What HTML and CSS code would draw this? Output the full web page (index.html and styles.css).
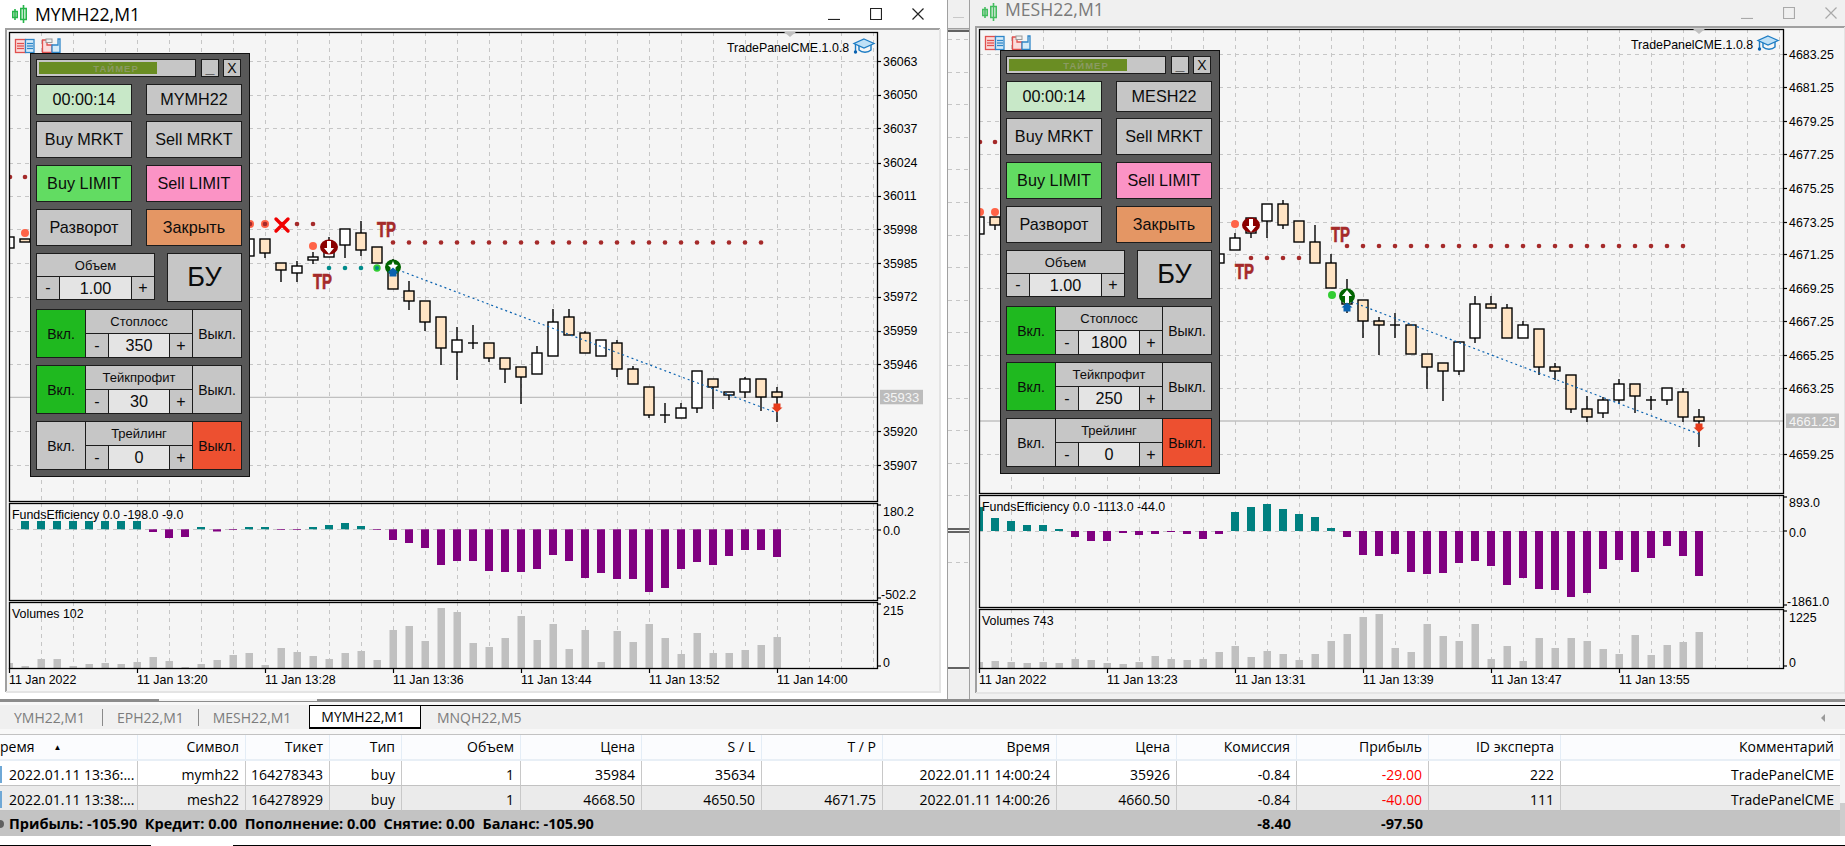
FILE: index.html
```html
<!DOCTYPE html>
<html lang="ru">
<head>
<meta charset="utf-8">
<title>MetaTrader 5 - TradePanelCME</title>
<link rel="stylesheet" href="styles.css">
</head>
<body>
<div class="app">
  <div class="desktop">
    <section class="window win-left">
      <header class="titlebar title-active">
        <svg class="ticon" viewBox="0 0 15 18"><path d="M3 4v11M.8 6.500h4.400v6H.8zM11.500 0v18M8.800 3.500h5.400v11H8.800z"/></svg>
        <span class="wtitle">MYMH22,M1</span>
        <div class="controls">
          <button class="ctl"><svg viewBox="0 0 12 12"><path d="M0 11.5h12"/></svg></button>
          <button class="ctl"><svg viewBox="0 0 12 12"><path d="M.5.5h11v11H.5z"/></svg></button>
          <button class="ctl"><svg viewBox="0 0 12 12"><path d="M.5.5l11 11M11.5.5l-11 11"/></svg></button>
        </div>
      </header>
      <div class="win-body">
        <svg id="chartL" class="chart chart-left"></svg>
        <div class="panel panel-left">
          <div class="p-row r-top">
            <div class="pb timer"><span class="timer-fill"></span><span class="timer-text">ТАЙМЕР</span></div>
            <div class="pb sq under">_</div>
            <div class="pb sq sq-x">X</div>
          </div>
          <div class="p-row r-clock"><div class="pb clock">00:00:14</div><div class="pb">MYMH22</div></div>
          <div class="p-row r-btn"><div class="pb">Buy MRKT</div><div class="pb">Sell MRKT</div></div>
          <div class="p-row r-btn"><div class="pb buy">Buy LIMIT</div><div class="pb sell">Sell LIMIT</div></div>
          <div class="p-row r-btn"><div class="pb">Разворот</div><div class="pb close">Закрыть</div></div>
          <div class="p-row r-vol">
            <div class="vol"><div class="pb lbl">Объем</div><div class="stepper"><div class="pb st">-</div><div class="pb val">1.00</div><div class="pb st">+</div></div></div>
            <div class="pb bu">БУ</div>
          </div>
          <div class="group"><div class="pb gb on">Вкл.</div><div class="gmid"><div class="pb lbl">Стоплосс</div><div class="stepper"><div class="pb st">-</div><div class="pb val">350</div><div class="pb st">+</div></div></div><div class="pb gb">Выкл.</div></div>
          <div class="group"><div class="pb gb on">Вкл.</div><div class="gmid"><div class="pb lbl">Тейкпрофит</div><div class="stepper"><div class="pb st">-</div><div class="pb val">30</div><div class="pb st">+</div></div></div><div class="pb gb">Выкл.</div></div>
          <div class="group"><div class="pb gb">Вкл.</div><div class="gmid"><div class="pb lbl">Трейлинг</div><div class="stepper"><div class="pb st">-</div><div class="pb val">0</div><div class="pb st">+</div></div></div><div class="pb gb off">Выкл.</div></div>
        </div>
      </div>
    </section>

    <section class="window win-back">
      <header class="titlebar-back"><span class="back-min"></span></header>
      <svg id="chartB" class="chart chart-back"></svg>
    </section>

    <section class="window win-right">
      <header class="titlebar title-inactive">
        <svg class="ticon" viewBox="0 0 15 18"><path d="M3 4v11M.8 6.500h4.400v6H.8zM11.500 0v18M8.800 3.500h5.400v11H8.800z"/></svg>
        <span class="wtitle">MESH22,M1</span>
        <div class="controls">
          <button class="ctl"><svg viewBox="0 0 12 12"><path d="M0 11.5h12"/></svg></button>
          <button class="ctl"><svg viewBox="0 0 12 12"><path d="M.5.5h11v11H.5z"/></svg></button>
          <button class="ctl"><svg viewBox="0 0 12 12"><path d="M.5.5l11 11M11.5.5l-11 11"/></svg></button>
        </div>
      </header>
      <div class="win-body">
        <svg id="chartR" class="chart chart-right"></svg>
        <div class="panel panel-right">
          <div class="p-row r-top">
            <div class="pb timer"><span class="timer-fill"></span><span class="timer-text">ТАЙМЕР</span></div>
            <div class="pb sq under">_</div>
            <div class="pb sq sq-x">X</div>
          </div>
          <div class="p-row r-clock"><div class="pb clock">00:00:14</div><div class="pb">MESH22</div></div>
          <div class="p-row r-btn"><div class="pb">Buy MRKT</div><div class="pb">Sell MRKT</div></div>
          <div class="p-row r-btn"><div class="pb buy">Buy LIMIT</div><div class="pb sell">Sell LIMIT</div></div>
          <div class="p-row r-btn"><div class="pb">Разворот</div><div class="pb close">Закрыть</div></div>
          <div class="p-row r-vol">
            <div class="vol"><div class="pb lbl">Объем</div><div class="stepper"><div class="pb st">-</div><div class="pb val">1.00</div><div class="pb st">+</div></div></div>
            <div class="pb bu">БУ</div>
          </div>
          <div class="group"><div class="pb gb on">Вкл.</div><div class="gmid"><div class="pb lbl">Стоплосс</div><div class="stepper"><div class="pb st">-</div><div class="pb val">1800</div><div class="pb st">+</div></div></div><div class="pb gb">Выкл.</div></div>
          <div class="group"><div class="pb gb on">Вкл.</div><div class="gmid"><div class="pb lbl">Тейкпрофит</div><div class="stepper"><div class="pb st">-</div><div class="pb val">250</div><div class="pb st">+</div></div></div><div class="pb gb">Выкл.</div></div>
          <div class="group"><div class="pb gb">Вкл.</div><div class="gmid"><div class="pb lbl">Трейлинг</div><div class="stepper"><div class="pb st">-</div><div class="pb val">0</div><div class="pb st">+</div></div></div><div class="pb gb off">Выкл.</div></div>
        </div>
      </div>
    </section>
  </div>

  <div class="divider"><span class="hbar"></span></div>

  <nav class="tabs">
    <div class="tab tab-first">YMH22,M1</div>
    <div class="tab">EPH22,M1</div>
    <div class="tab tab-pre">MESH22,M1</div>
    <div class="tab tab-active">MYMH22,M1</div>
    <div class="tab tab-last">MNQH22,M5</div>
    <span class="tab-arrow"></span>
  </nav>

  <div class="table-wrap">
    <div class="table">
      <div class="trow thead">
        <div class="c l"><span class="hfirst">ремя</span><span class="sort">▲</span></div><div class="c">Символ</div><div class="c">Тикет</div><div class="c">Тип</div><div class="c">Объем</div><div class="c">Цена</div><div class="c">S / L</div><div class="c">T / P</div><div class="c">Время</div><div class="c">Цена</div><div class="c">Комиссия</div><div class="c">Прибыль</div><div class="c">ID эксперта</div><div class="c">Комментарий</div>
      </div>
      <div class="trow row-a">
        <div class="c l"><span class="mark"></span>2022.01.11 13:36:...</div><div class="c">mymh22</div><div class="c">164278343</div><div class="c">buy</div><div class="c">1</div><div class="c">35984</div><div class="c">35634</div><div class="c"></div><div class="c">2022.01.11 14:00:24</div><div class="c">35926</div><div class="c">-0.84</div><div class="c neg">-29.00</div><div class="c">222</div><div class="c">TradePanelCME</div>
      </div>
      <div class="trow row-b">
        <div class="c l"><span class="mark"></span>2022.01.11 13:38:...</div><div class="c">mesh22</div><div class="c">164278929</div><div class="c">buy</div><div class="c">1</div><div class="c">4668.50</div><div class="c">4650.50</div><div class="c">4671.75</div><div class="c">2022.01.11 14:00:26</div><div class="c">4660.50</div><div class="c">-0.84</div><div class="c neg">-40.00</div><div class="c">111</div><div class="c">TradePanelCME</div>
      </div>
      <div class="trow row-sum">
        <div class="c l sum-main"><span class="dot"></span>Прибыль: -105.90&nbsp; Кредит: 0.00&nbsp; Пополнение: 0.00&nbsp; Снятие: 0.00&nbsp; Баланс: -105.90</div><div class="c">-8.40</div><div class="c">-97.50</div><div class="c"></div><div class="c"></div>
      </div>
    </div>
    <div class="scrollbar"><span class="thumb"></span></div>
  </div>
  <div class="footline"><span class="fl-a"></span><span class="fl-b"></span></div>
</div>
<script src="app.js"></script>
</body>
</html>
```

FILE: styles.css
```css
* { box-sizing: border-box; }
html, body { margin: 0; padding: 0; width: 1845px; height: 846px; overflow: hidden; background: #fff; }
.app { width: 1845px; height: 846px; display: flex; flex-direction: column; font-family: "Open Sans", "Noto Sans", sans-serif; color: #000; }

/* desktop + windows */
.desktop { position: relative; height: 699px; background: #f0f0f0; flex: none; overflow: hidden; }
.window { position: absolute; top: 0; height: 699px; display: flex; flex-direction: column; overflow: hidden; }
.win-left { left: 0; width: 948px; background: #fff; border-right: 1px solid #a0a0a0; }
.win-back { left: 948px; width: 22px; background: #f0f0f0; border-right: 1px solid #a0a0a0; }
.win-right { left: 970px; width: 875px; background: #f0f0f0; }

.titlebar { flex: none; display: flex; align-items: center; padding-left: 12px; }
.title-active { height: 28px; background: #fff; color: #000; }
.title-inactive { height: 26px; background: #f0f0f0; color: #7a7a7a; padding-bottom: 9px; }
.ticon { width: 15px; height: 18px; fill: none; stroke: #27b54a; stroke-width: 1.6; flex: none; margin-right: 8px; overflow: visible; }
.title-inactive .ticon { stroke: #44bd5f; margin-top: 7px; }
.wtitle { font-size: 17.6px; line-height: 22px; white-space: nowrap; }
.controls { margin-left: auto; display: flex; margin-right: 8px; }
.title-inactive .controls { margin-right: -7px; padding-top: 9px; }
.ctl { width: 42px; height: 20px; padding: 0; border: 0; background: none; display: flex; align-items: center; justify-content: center; }
.ctl svg { width: 12px; height: 12px; fill: none; stroke: #222; stroke-width: 1.2; display: block; }
.title-inactive .ctl svg { stroke: #a9a9a9; }

.titlebar-back { height: 28px; flex: none; display: flex; align-items: center; justify-content: center; padding-top: 6px; }
.back-min { width: 11px; height: 1px; background: #c8c8c8; }

.win-body { position: relative; flex: 1; min-height: 0; }
.chart { display: block; }
.chart-left { width: 947px; height: 671px; }
.chart-back { width: 21px; height: 671px; }
.chart-right { width: 875px; height: 673px; }

/* svg parts */
.frame { fill: #f5f5f5; }
.fr-dark { stroke: #a0a0a0; stroke-width: 2; fill: none; }
.fr-light { stroke: #e4e4e4; stroke-width: 2; fill: none; }
.grid { stroke: #c6c6c6; stroke-width: 1; stroke-dasharray: 4 4; shape-rendering: crispEdges; fill: none; }
.cur { stroke: #c0c0c0; stroke-width: 1.3; }
.pane { fill: none; stroke: #000; stroke-width: 1.3; }
.tick { stroke: #000; stroke-width: 1.2; }
.wick { stroke: #000; stroke-width: 1.4; }
.bd { stroke: #000; stroke-width: 1.4; }
.bd-w { fill: #fff; }
.bd-p { fill: #ffe4c4; }
.dot-br { fill: #a52a2a; }
.dot-to { fill: #ff6347; }
.dot-te { fill: #008b8b; }
.dot-gr { fill: #32cd32; }
.v-te { fill: #008080; }
.v-pu { fill: #800080; }
.v-gr { fill: #c0c0c0; }
.trend { stroke: #0a62b0; stroke-width: 1.2; stroke-dasharray: 2 3; fill: none; }
.tx { font-family: "Liberation Sans", Arial, sans-serif; font-size: 12.4px; fill: #000; }
.tx-cur { fill: #f4f4f4; font-size: 13px; }
.cur-box { fill: #bcbcbc; }
.tp { font-family: "Liberation Sans", Arial, sans-serif; font-weight: 700; font-size: 22px; fill: #a52a2a; stroke: #a52a2a; stroke-width: .7; }
.x-mark { stroke: #f00000; stroke-width: 3.4; fill: none; stroke-linecap: round; }
.sell-ring { fill: #8b0000; }
.buy-ring { fill: #006400; }
.arrow-w { fill: #fff; }
.arrow-b { fill: #0a62b0; }
.arrow-r { fill: #e63a1a; }
.tri { fill: #c0c0c0; }
.cap-a { fill: #bfe0f6; stroke: #1c7cc4; stroke-width: 1.3; }
.cap-b { fill: none; stroke: #1c7cc4; stroke-width: 1.4; }
.ic-r { fill: #fbdcdc; stroke: #e0504e; stroke-width: 1.3; }
.ic-b { fill: #d6ebf8; stroke: #2e86c8; stroke-width: 1.3; }
.ic-rl { stroke: #e0504e; stroke-width: 1.3; }
.ic-bl { stroke: #2e86c8; stroke-width: 1.3; }
.ic-g { fill: #f0f0f0; stroke: #999; stroke-width: 1; }

/* trade panel */
.panel { position: absolute; width: 220px; height: 424px; padding: 5px 7px 6px 5px; background: #585858; border: 1px solid #111; display: flex; flex-direction: column; gap: 7px; font-family: "Liberation Sans", Arial, sans-serif; color: #0c0c0c; }
.panel-left { left: 30px; top: 25px; }
.panel-right { left: 30px; top: 24px; }
.p-row { display: flex; flex: none; }
.pb { background: #c6c6c6; border: 1px solid #1c1c1c; display: flex; align-items: center; justify-content: center; font-size: 16.2px; white-space: nowrap; }
.r-top { height: 18px; gap: 4px; }
.r-clock { height: 31px; margin-bottom: -1px; gap: 14px; }
.r-btn { height: 37px; gap: 14px; }
.r-clock .pb, .r-btn .pb { width: 96px; }
.timer { position: relative; width: 160px; margin-right: 1px; }
.timer-fill { position: absolute; left: 2px; top: 2px; bottom: 2px; width: 118px; background: #6a8d23; }
.timer-text { position: relative; font-size: 9.5px; font-weight: 700; letter-spacing: 1px; color: #8a9a62; }
.sq { width: 18px; font-size: 14px; }
.under { font-size: 16px; font-weight: 700; }
.clock { background: #c8e8c8; }
.buy { background: #62dc62; }
.sell { background: #fb93c5; }
.close { background: #e49664; }
.r-vol { height: 49px; justify-content: space-between; }
.vol { width: 119px; height: 47px; display: flex; flex-direction: column; }
.lbl { font-size: 13px; height: 24px; flex: none; background: #c6c6c6; }
.stepper { display: flex; flex: 1; margin-top: -1px; }
.st { width: 24px; flex: none; font-size: 16px; }
.val { flex: 1; margin: 0 -1px; background: #e4e4e4; }
.bu { width: 75px; font-size: 27px; }
.group { display: flex; height: 49px; flex: none; }
.gb { width: 50px; flex: none; font-size: 14px; }
.on { background: #1fb91f; }
.off { background: #ed5030; }
.gmid { flex: 1; margin: 0 -1px; display: flex; flex-direction: column; }
.gmid .lbl { height: 25px; }

/* bottom area */
.divider { height: 3px; background: #8c8c8c; flex: none; position: relative; }
.hbar { position: absolute; left: 158px; top: 0; width: 160px; height: 3px; background: #f4f4f4; border: 1px solid #8c8c8c; border-top: 0; }
.tabs { flex: none; height: 33px; padding: 3px 0 5px; display: flex; align-items: stretch; background: #f8f8f8; position: relative; font-size: 14px; color: #7c7c7c; border-bottom: 1px solid #c2c2c2; }
.tab { display: flex; align-items: center; padding: 0 15px 0 14px; background: #f0f0f0; white-space: nowrap; position: relative; border-top: 1px solid #f0f0f0; }
.tab + .tab::before { content: ""; position: absolute; left: -1px; top: 3px; bottom: 3px; width: 1px; background: #8a8a8a; }
.tab-first { padding-right: 18px; }
.tab-pre { padding-right: 18px; }
.tab-active { color: #000; background: #fff; border: 1px solid #000; border-bottom-width: 2px; padding: 0 15px 0 11px; }
.tab-active::before, .tab-last::before { display: none; }
.tab-last { flex: 1; border-top: 1px solid #000; padding-left: 16px; }
.tab-arrow { position: absolute; left: 1821px; top: 12px; width: 0; height: 0; border: 4px solid transparent; border-left-width: 0; border-right: 4px solid #9a9a9a; }
.table-wrap { flex: none; display: flex; height: 101px; }
.table { width: 1840px; font-size: 14px; line-height: 18px; overflow: hidden; }
.trow { display: grid; grid-template-columns: 138px 108px 84px 72px 119px 121px 120px 121px 174px 120px 120px 132px 132px 279px; height: 25px; white-space: nowrap; }
.c { display: flex; align-items: center; justify-content: flex-end; padding-right: 6px; }
.c.l { justify-content: flex-start; padding-right: 0; overflow: visible; }
.thead { background: #fbfcfe; height: 26px; }
.thead .c { border-right: 1px solid #e4edf6; border-bottom: 2px solid #e8eff6; }
.sort { font-size: 8px; margin-left: 19px; }
.mark { width: 2px; height: 17px; background: #6fa8d6; margin-right: 7px; flex: none; }
.row-a .c, .row-b .c { border-right: 1px solid #c8c8c8; border-bottom: 1px solid #c2c2c2; padding-top: 3px; }
.row-a .c:last-child, .row-b .c:last-child, .thead .c:last-child { border-right: 0; }
.row-b { background: #ebebeb; }
.neg { color: #f00; }
.row-sum { background: #c3c3c3; font-weight: 700; font-size: 14.5px; height: 25px; }
.sum-main { grid-column: 1 / 11; }
.dot { width: 4px; height: 8px; border-radius: 0 4px 4px 0; background: #5f5f5f; margin-right: 5px; flex: none; }
.scrollbar { width: 5px; background: #f4f4f4; display: flex; align-items: flex-end; }
.thumb { width: 5px; height: 33px; background: #cdcdcd; }
.footline { flex: 1; display: flex; align-items: flex-end; }
.fl-a { width: 151px; height: 1px; background: #000; }
.fl-b { margin-left: 82px; flex: 1; height: 1px; background: #000; }
```

FILE: app.js
```js
function range(a, b, s) { var r = []; for (var i = a; i <= b; i += s) r.push(i); return r; }
function crisp(v) { return Math.round(v) + 0.5; }
function line(x1, y1, x2, y2, c) { return '<line class="' + c + '" x1="' + x1 + '" y1="' + y1 + '" x2="' + x2 + '" y2="' + y2 + '"/>'; }
function rect(x, y, w, h, c) { return '<rect class="' + c + '" x="' + x + '" y="' + y + '" width="' + w + '" height="' + h + '"/>'; }
function dot(x, y, r, c) { return '<circle class="' + c + '" cx="' + x + '" cy="' + y + '" r="' + r + '"/>'; }
function text(x, y, s, c) { return '<text class="' + (c || 'tx') + '" x="' + x + '" y="' + y + '">' + s + '</text>'; }
function tp(x, y) { return '<text class="tp" x="' + x + '" y="' + y + '" textLength="19" lengthAdjust="spacingAndGlyphs">TP</text>'; }

function capIcon(x, y) {
  return '<g transform="translate(' + x + ' ' + y + ')">' +
    '<path class="cap-b" d="M5 6v5c3 3 9 3 12 0V6"/>' +
    '<path class="cap-a" d="M10 0l10 4.5-10 4.5L0 4.5z"/>' +
    '<path class="cap-b" d="M1.5 5v7"/>' + dot(1.5, 13, 1.7, 'arrow-b') + '</g>';
}
function toolIcons(x, y) {
  return '<g transform="translate(' + x + ' ' + y + ')">' +
    '<rect class="ic-r" x=".5" y=".5" width="10" height="13"/><rect class="ic-b" x="10.5" y=".5" width="8.5" height="13"/>' +
    line(2, 4.5, 9, 4.5, 'ic-rl') + line(2, 7, 9, 7, 'ic-rl') + line(2, 9.5, 9, 9.5, 'ic-rl') +
    line(12, 4.5, 18, 4.5, 'ic-bl') + line(12, 7, 18, 7, 'ic-bl') + line(12, 9.5, 18, 9.5, 'ic-bl') +
    '<path class="ic-r" d="M27.5 1v12.5H37V6h-5V1z"/><path class="ic-b" d="M37 13.500h8V0h-2v6h-6z"/>' +
    '<rect class="ic-g" x="31" y="0" width="6" height="3.500"/></g>';
}
/* stubby marker arrows: head 11 wide, shaft 7 wide */
function arrowUp(x, y, c) { return '<path class="' + c + '" d="M' + x + ' ' + (y - 4.5) + 'l5.500 5h-2v4h-7v-4h-2z"/>'; }
function arrowDown(x, y, c) { return '<path class="' + c + '" d="M' + x + ' ' + (y + 4.5) + 'l5.500-5h-2v-4h-7v4h-2z"/>'; }
/* long white arrows inside the entry / exit rings */
function ringDown(x, y) { return '<path class="arrow-w" d="M' + (x - 2) + ' ' + (y - 6) + 'h4v7h3l-5 6-5-6h3z"/>'; }
function ringUp(x, y) { return '<path class="arrow-w" d="M' + (x - 2) + ' ' + (y + 7) + 'h4v-7h3l-5-6-5 6h3z"/>'; }
function sellMark(x, y) {
  return '<ellipse class="sell-ring" cx="' + x + '" cy="' + y + '" rx="9" ry="7.500"/>' + ringDown(x, y);
}
function buyMark(x, y, tall) {
  var s = '<ellipse class="buy-ring" cx="' + x + '" cy="' + y + '" rx="8" ry="7.500"/>';
  if (tall) return s + ringUp(x, y);
  return s + '<path class="arrow-w" d="M' + x + ' ' + (y - 6) + 'l1.500 3.500 3.500.5-2.500 2.500v2.500h-5v-2.500l-2.500-2.500 3.500-.5z"/>';
}
function candle(d) {
  var x = d[0], t = d[1], a = d[2], b = d[3], wt = d[4] === undefined ? a : d[4], wb = d[5] === undefined ? b : d[5];
  var s = line(x, wt, x, wb, 'wick');
  if (t === 'd') return s + line(x - 5, a, x + 5, a, 'wick');
  return s + rect(x - 5, a, 10, b - a, 'bd ' + (t === 'w' ? 'bd-w' : 'bd-p'));
}

function chart(c) {
  var out = '';
  out += '<clipPath id="' + c.id + 'clip"><rect x="' + c.L + '" y="' + c.top + '" width="' + (c.R - c.L) + '" height="' + (c.bottom - c.top) + '"/></clipPath>';
  out += rect(c.fx, c.fy, c.fr - c.fx, c.fb - c.fy, 'frame');
  out += '<path class="fr-dark" d="M' + c.fx + ' ' + c.fb + 'V' + c.fy + 'H' + c.fr + '"/>';
  out += '<path class="fr-light" d="M' + c.fx + ' ' + c.fb + 'H' + c.fr + 'V' + c.fy + '"/>';
  var body = '';
  var m = c.panes[0], s1 = c.panes[1], s2 = c.panes[2];
  c.prices.forEach(function (p) { body += line(c.L, crisp(p[1]), c.R, crisp(p[1]), 'grid'); });
  range(c.gx0, c.gx1, 32).forEach(function (x) {
    body += line(x + .5, m[0], x + .5, m[1], 'grid');
    body += line(x + .5, s1[0], x + .5, s1[1], 'grid');
    body += line(x + .5, s2[0], x + .5, s2[1], 'grid');
  });
  body += line(c.L, crisp(c.zero), c.R, crisp(c.zero), 'grid');
  body += line(c.L, c.curY, c.R, c.curY, 'cur');
  c.sub.forEach(function (y, i) {
    var x = c.subStart + 16 * i;
    if (y < c.zero) body += rect(x - 4, y, 8, c.zero - y, 'v-te');
    else body += rect(x - 4, c.zero, 8, y - c.zero, 'v-pu');
  });
  c.vol.forEach(function (y, i) {
    var x = c.L + 16 * i;
    body += rect(x - 3.5, y, 7.5, s2[1] - y, 'v-gr');
  });
  var under = '', over = '';
  (c.under || []).forEach(function (a) { under += a; });
  c.candles.forEach(function (d) { under += candle(d); });
  (c.over || []).forEach(function (a) { over += a; });
  out += '<g clip-path="url(#' + c.id + 'clip)">' + body + under + over + '</g>';
  c.panes.forEach(function (p) { out += rect(c.L + .5, p[0] + .5, c.R - c.L, p[1] - p[0], 'pane'); });
  c.prices.forEach(function (p) {
    out += line(c.R, crisp(p[1]), c.R + 4, crisp(p[1]), 'tick');
    out += text(c.R + 6, p[1] + 4.5, p[0]);
  });
  c.axis.forEach(function (a) {
    out += line(c.R, a[2], c.R + 4, a[2], 'tick');
    out += text(c.R + 6 + (a[3] || 0), a[1] + 4.5, a[0]);
  });
  out += rect(c.R + 3, c.curY - 7.5, c.curW, 14.5, 'cur-box');
  out += text(c.R + 6, c.curY + 5, c.cur, 'tx tx-cur');
  c.times.forEach(function (t) {
    out += line(t[0] + .5, s2[1], t[0] + .5, s2[1] + 5, 'tick');
    out += text(t[0], s2[1] + 16, t[1]);
  });
  out += text(c.L + 3, s1[0] + 16, c.l1);
  out += text(c.L + 3, s2[0] + 16, c.l2);
  out += text(c.titleEnd - 119, c.top + 19.5, 'TradePanelCME.1.0.8');
  out += capIcon(c.titleEnd + 8, c.top + 7);
  out += '<path class="tri" d="M' + (c.triX - 6) + ' ' + c.top + 'h12l-6 5z"/>';
  out += toolIcons(c.L + 6, c.top + 7);
  var svg = document.getElementById(c.id);
  svg.setAttribute('viewBox', c.vb);
  svg.innerHTML = out;
}

var subL = [521, 521, 521, 521, 521, 521, 521, 521, 532, 538, 537, 527, 531.5, 530, 527, 527, 530, 530, 527, 525, 523, 526, 530,
  540, 543, 548, 565, 561, 561, 571, 572, 572, 569, 555, 561, 578, 573, 579, 579, 592, 588, 569, 562, 565, 556, 550, 550, 557];
var volL = [663, 666, 659, 659, 666, 664, 663, 664, 662, 657, 661, 667, 664, 660, 655, 653, 665, 648, 652, 656, 659, 653, 651, 660,
  630, 626, 641, 608, 612, 643, 647, 638, 616, 640, 624, 649, 630, 662, 631, 642, 624, 638, 654, 633, 653, 653, 650, 645, 637];

chart({
  id: 'chartL', vb: '0 28 947 671',
  L: 9, R: 877, top: 32, bottom: 668,
  fx: 6, fy: 29, fr: 940, fb: 692,
  panes: [[32, 501], [503, 600], [602, 668]],
  gx0: 41, gx1: 873, zero: 529.3, curY: 397.3, cur: '35933', curW: 43,
  prices: [['36063', 61], ['36050', 94.6], ['36037', 128], ['36024', 162.5], ['36011', 195.7], ['35998', 229], ['35985', 263], ['35972', 296.7], ['35959', 330.7], ['35946', 364], ['35920', 431], ['35907', 465]],
  axis: [['180.2', 511, 505], ['0.0', 530, 530], ['-502.2', 594, 598, -2], ['215', 610, 604], ['0', 662, 666]],
  times: [[9, '11 Jan 2022'], [137, '11 Jan 13:20'], [265, '11 Jan 13:28'], [393, '11 Jan 13:36'], [521, '11 Jan 13:44'], [649, '11 Jan 13:52'], [777, '11 Jan 14:00']],
  l1: 'FundsEfficiency 0.0 -198.0 -9.0', l2: 'Volumes 102',
  titleEnd: 846, triX: 790,
  subStart: 25, sub: subL, vol: volL,
  under: [dot(10, 177, 2.3, 'dot-br'), dot(25, 177, 2.3, 'dot-br'), dot(25, 233, 4, 'dot-to')]
    .concat([250, 265].map(function (x) { return dot(x, 224, 4, 'dot-to') + dot(x, 224, 2.3, 'dot-br'); }))
    .concat([282, 297, 313].map(function (x) { return dot(x, 224, 2.3, 'dot-br'); }))
    .concat(range(393, 761, 16).map(function (x) { return dot(x, 242.5, 2.3, 'dot-br'); }))
    .concat([329, 345, 361, 377].map(function (x) { return dot(x, 268, 2.3, 'dot-te'); })),
  candles: [
    [9, 'w', 237, 248], [25, 'p', 239, 242], [249, 'w', 239, 256], [265, 'p', 239, 253, 239, 258], [281, 'p', 263, 270, 263, 282],
    [297, 'w', 266, 273, 261, 282], [313, 'w', 257, 260, 252, 264], [329, 'w', 248, 257, 237, 257], [345, 'w', 229, 245, 229, 258],
    [361, 'p', 233, 250, 221, 256], [377, 'p', 247, 263], [393, 'p', 263, 289, 259, 289], [409, 'p', 291, 301, 281, 310],
    [425, 'p', 301, 322, 301, 331], [441, 'p', 317, 348, 317, 365], [457, 'w', 340, 352, 327, 380], [473, 'd', 343, 343, 325, 349],
    [489, 'p', 343, 358, 343, 362], [505, 'p', 358, 369, 358, 383], [521, 'p', 367, 377, 367, 404], [537, 'w', 353, 374, 346, 374],
    [553, 'w', 322, 356, 309, 356], [569, 'p', 317, 335, 309, 335], [585, 'p', 333, 353, 331, 353], [601, 'w', 340, 356],
    [617, 'p', 343, 369, 340, 377], [633, 'p', 369, 384, 366, 384], [649, 'p', 387, 415, 387, 418], [665, 'd', 415, 415, 403, 423],
    [681, 'w', 408, 418, 403, 418], [697, 'w', 371, 408, 371, 413], [713, 'p', 379, 387, 379, 409], [729, 'w', 392, 395, 392, 400],
    [745, 'w', 379, 392, 377, 398], [761, 'p', 379, 397, 379, 411], [777, 'p', 392, 397, 387, 422]
  ],
  over: [
    '<line class="trend" x1="393" y1="268" x2="777" y2="413"/>',
    dot(377, 268, 3.7, 'dot-gr'), dot(377, 268, 2, 'dot-te'), dot(313, 246, 4, 'dot-to'),
    sellMark(329, 247), buyMark(393, 267), arrowUp(393, 272, 'arrow-b'), arrowDown(777, 408, 'arrow-r'),
    '<path class="x-mark" d="M276 219l12 12M288 219l-12 12"/>',
    tp(377, 237), tp(313, 289)
  ]
});

var subR = [507, 518, 521, 525, 525, 529, 537, 541, 541, 533, 535, 534, 532, 534, 539, 534, 512, 507, 504, 509, 514, 517, 528,
  537, 555, 556, 554, 572, 574, 573, 563, 561, 566, 585, 578, 589, 590, 597, 593, 569, 560, 572, 558, 546, 556, 576];
var volR = [662, 661, 662, 663, 662, 663, 659, 660, 663, 664, 662, 656, 659, 660, 659, 652, 646, 657, 651, 654, 660, 654, 641, 634,
  617, 614, 648, 652, 624, 636, 641, 624, 659, 646, 661, 638, 648, 638, 641, 649, 654, 635, 655, 645, 642, 632];

chart({
  id: 'chartR', vb: '970 26 875 673',
  L: 979, R: 1783, top: 29, bottom: 668,
  fx: 976, fy: 27, fr: 1845, fb: 693,
  panes: [[29, 493], [495, 607], [609, 668]],
  gx0: 1011, gx1: 1779, zero: 531, curY: 421, cur: '4661.25', curW: 53,
  prices: [['4683.25', 54], ['4681.25', 87], ['4679.25', 121], ['4677.25', 154], ['4675.25', 188], ['4673.25', 222], ['4671.25', 254], ['4669.25', 288], ['4667.25', 321], ['4665.25', 355], ['4663.25', 388], ['4659.25', 454]],
  axis: [['893.0', 502, 497], ['0.0', 532, 531], ['-1861.0', 601, 605, -2], ['1225', 617, 611], ['0', 662, 666]],
  times: [[979, '11 Jan 2022'], [1107, '11 Jan 13:23'], [1235, '11 Jan 13:31'], [1363, '11 Jan 13:39'], [1491, '11 Jan 13:47'], [1619, '11 Jan 13:55']],
  l1: 'FundsEfficiency 0.0 -1113.0 -44.0', l2: 'Volumes 743',
  titleEnd: 1750, triX: 1699,
  subStart: 979, sub: subR, vol: volR,
  under: [dot(980, 142, 2.3, 'dot-br'), dot(995, 142, 2.3, 'dot-br'), dot(980, 212, 4, 'dot-to'), dot(995, 212, 4, 'dot-to')]
    .concat(range(1347, 1683, 16).map(function (x) { return dot(x, 246, 2.3, 'dot-br'); }))
    .concat([1251, 1267, 1283, 1299].map(function (x) { return dot(x, 258, 2.3, 'dot-br'); })),
  candles: [
    [979, 'w', 217, 234], [995, 'p', 217, 225, 217, 230], [1219, 'w', 254, 263], [1235, 'w', 238, 250, 233, 250],
    [1251, 'w', 218, 233, 218, 238], [1267, 'w', 204, 221, 204, 238], [1283, 'p', 204, 225, 200, 229], [1299, 'p', 221, 242],
    [1315, 'p', 242, 263, 225, 263], [1331, 'p', 263, 288, 254, 288], [1347, 'w', 293, 304, 279, 313], [1363, 'p', 300, 321, 300, 338],
    [1379, 'p', 321, 325, 317, 355], [1395, 'd', 325, 325, 313, 338], [1411, 'p', 325, 354], [1427, 'p', 354, 367, 354, 389],
    [1443, 'p', 363, 371, 363, 401], [1459, 'w', 342, 371, 342, 375], [1475, 'w', 304, 338, 296, 343], [1491, 'p', 304, 308, 296, 308],
    [1507, 'p', 308, 338, 304, 338], [1523, 'w', 325, 338, 321, 338], [1539, 'p', 329, 367, 329, 375], [1555, 'p', 367, 371, 363, 380],
    [1571, 'p', 375, 409, 375, 413], [1587, 'p', 409, 417, 396, 422], [1603, 'w', 400, 413, 397, 418], [1619, 'w', 384, 400, 379, 404],
    [1635, 'p', 384, 396, 384, 413], [1651, 'd', 400, 400, 396, 410], [1667, 'w', 388, 400, 388, 405], [1683, 'p', 392, 417, 388, 422],
    [1699, 'p', 417, 421, 409, 447]
  ],
  over: [
    '<line class="trend" x1="1347" y1="300" x2="1699" y2="434"/>',
    dot(1235, 224, 4, 'dot-to'), dot(1332, 295, 4, 'dot-gr'),
    sellMark(1251, 225), buyMark(1347, 296, true), arrowUp(1347, 307, 'arrow-b'), arrowDown(1699, 428, 'arrow-r'),
    tp(1331, 242), tp(1235, 279)
  ]
});

(function back() {
  var s = '';
  s += rect(948, 30, 21, 640, 'frame');
  s += line(948, 28.5, 969, 28.5, 'fr-dark');
  range(39, 496, 32.6).forEach(function (y) { s += line(948, crisp(y), 969, crisp(y), 'grid'); });
  s += line(948, 31, 969, 31, 'tick');
  s += line(948, 529, 969, 529, 'tick') + line(948, 532, 969, 532, 'tick');
  s += line(948, 562.5, 969, 562.5, 'grid');
  s += line(948, 668, 969, 668, 'tick');
  var svg = document.getElementById('chartB');
  svg.setAttribute('viewBox', '948 28 21 671');
  svg.innerHTML = s;
})();
```
